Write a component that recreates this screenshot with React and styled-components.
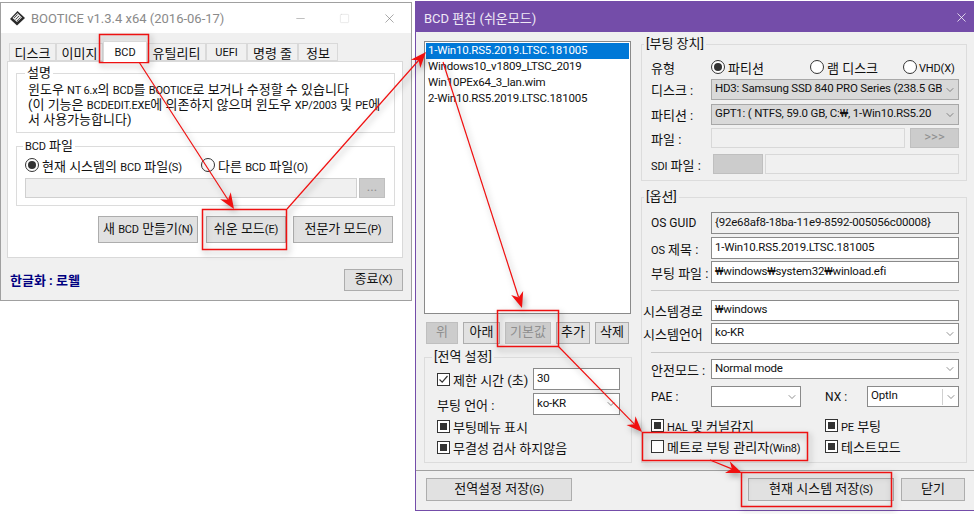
import styled, { createGlobalStyle } from 'styled-components';
import { ChevronDown, X, Minus, Square } from 'lucide-react';

const Global = createGlobalStyle`
  * { box-sizing: border-box; }
  body {
    margin: 0;
    background: #fff;
    font-family: Roboto, "Noto Sans CJK KR", sans-serif;
    font-size: 13px;
    color: #111;
  }
`;

const Desktop = styled.div`
  position: relative;
  width: 974px;
  height: 514px;
  overflow: hidden;
  background: #fff;
`;

const Win = styled.div`
  position: absolute;
  left: ${p => p.$x}px;
  top: ${p => p.$y}px;
  width: ${p => p.$w}px;
  height: ${p => p.$h}px;
  background: #f0f0f0;
  border: 1px solid ${p => p.$border};
  display: flex;
  flex-direction: column;
`;

const TitleBar = styled.div`
  height: ${p => p.$h}px;
  flex: none;
  display: flex;
  align-items: center;
  background: ${p => p.$bg};
  color: ${p => p.$color};
  padding-left: ${p => p.$pad}px;
  font-size: 13px;
`;

const TitleText = styled.span`
  margin-left: ${p => p.$ml || 0}px;
`;

const Controls = styled.div`
  margin-left: auto;
  display: flex;
  align-items: center;
  gap: ${p => p.$gap || 0}px;
  padding-right: ${p => p.$pr}px;
`;

const Tabs = styled.div`
  display: flex;
  height: 18px;
  margin: 10px 0 0 8px;
  align-items: flex-end;
`;

const Tab = styled.div`
  width: ${p => p.$w}px;
  height: ${p => (p.$active ? 21 : 18)}px;
  margin-bottom: ${p => (p.$active ? -1 : 0)}px;
  background: ${p => (p.$active ? '#fff' : '#f0f0f0')};
  border: 1px solid #d9d9d9;
  border-bottom: ${p => (p.$active ? 'none' : '1px solid #d9d9d9')};
  font-size: ${p => (p.$latin ? 11 : 13)}px;
  display: flex;
  align-items: center;
  justify-content: center;
  white-space: nowrap;
  position: relative;
  z-index: ${p => (p.$active ? 1 : 0)};
`;

const Panel = styled.div`
  margin: 0 8px 0 6px;
  height: 197px;
  background: #fff;
  border: 1px solid #d9d9d9;
  padding: 11px 7px 0 8px;
`;

const Group = styled.div`
  position: relative;
  width: ${p => (p.$w ? `${p.$w}px` : 'auto')};
  height: ${p => p.$h}px;
  margin-top: ${p => p.$mt || 0}px;
  border: 1px solid #dcdcdc;
  padding: 0 ${p => p.$pr || 0}px 0 ${p => p.$pl || 0}px;
`;

const Legend = styled.span`
  position: absolute;
  left: ${p => p.$x}px;
  top: -9px;
  padding: 0 2px;
  line-height: 16px;
  font-size: 13px;
  background: ${p => p.$bg};
  white-space: nowrap;
`;

const Description = styled.p`
  margin: 9px 0 0 11px;
  font-size: 13px;
  line-height: 14px;
  white-space: nowrap;
`;

const Row = styled.div`
  display: flex;
  align-items: center;
  height: ${p => p.$h}px;
  margin-top: ${p => p.$mt || 0}px;
`;

const Label = styled.span`
  flex: none;
  width: ${p => p.$w}px;
  margin-left: ${p => p.$ml || 0}px;
  font-size: ${p => (p.$latin ? 12 : 13)}px;
  white-space: nowrap;
`;

const Field = styled.div`
  flex: ${p => (p.$w ? 'none' : 1)};
  width: ${p => (p.$w ? `${p.$w}px` : 'auto')};
  min-width: 0;
  height: 100%;
  margin-left: ${p => p.$ml || 0}px;
  padding: 0 3px 3px;
  background: ${p => p.$bg || '#fff'};
  border: 1px solid ${p => p.$border || '#8a8a8a'};
  font-size: 11.5px;
  letter-spacing: -0.2px;
  display: flex;
  align-items: center;
  white-space: nowrap;
  overflow: hidden;
`;

const SelectBox = styled(Field)`
  padding: 0 0 3px 3px;
`;

const SelectText = styled.span`
  flex: 1;
  min-width: 0;
  overflow: hidden;
`;

const Arrow = styled.span`
  flex: none;
  width: 16px;
  height: 100%;
  margin-bottom: -3px;
  display: flex;
  align-items: center;
  justify-content: center;
  color: #555;
  border-left: ${p => (p.$split ? '1px solid #d0d0d0' : 'none')};
`;

const Select = ({ text, w, gray, split, ml }) => (
  <SelectBox $w={w} $ml={ml} $bg={gray ? '#d9d9d9' : '#fff'} $border={gray ? '#a8a8a8' : '#8a8a8a'}>
    <SelectText>{text}</SelectText>
    <Arrow $split={split}><ChevronDown size={12} strokeWidth={1.3} /></Arrow>
  </SelectBox>
);

const Button = styled.div`
  flex: none;
  width: ${p => p.$w}px;
  height: ${p => p.$h}px;
  margin-left: ${p => p.$ml || 0}px;
  background: ${p => (p.$off ? '#cccccc' : '#e1e1e1')};
  border: 1px solid ${p => (p.$off ? '#bfbfbf' : '#adadad')};
  color: ${p => (p.$off ? '#8f8f8f' : '#111')};
  font-size: 13px;
  line-height: ${p => p.$h - 4}px;
  text-align: center;
  white-space: nowrap;
`;

const Small = styled.span`
  font-size: 11px;
  letter-spacing: -0.15px;
`;

const Option = styled.span`
  flex: none;
  display: inline-flex;
  align-items: center;
  gap: ${p => p.$gap ?? 3}px;
  width: ${p => (p.$w ? `${p.$w}px` : 'auto')};
  white-space: nowrap;
  font-size: 13px;
`;

const RadioDot = styled.span`
  flex: none;
  width: 14px;
  height: 14px;
  border-radius: 50%;
  border: 1px solid #333;
  background: #fff;
  display: flex;
  align-items: center;
  justify-content: center;
  &::after {
    content: "";
    width: 8px;
    height: 8px;
    border-radius: 50%;
    background: ${p => (p.$on ? '#333' : 'transparent')};
  }
`;

const CheckBox = styled.span`
  flex: none;
  width: 13px;
  height: 13px;
  border: 1px solid #333;
  background: #fff;
  display: flex;
  align-items: center;
  justify-content: center;
  &::after {
    content: "";
    width: 7px;
    height: 7px;
    background: ${p => (p.$fill ? '#333' : 'transparent')};
  }
`;

const TickBox = styled(CheckBox)`
  &::after { display: none; }
`;

const Radio = ({ on, w, gap, children }) => (
  <Option $w={w} $gap={gap}><RadioDot $on={on} /><span>{children}</span></Option>
);

const Check = ({ fill, tick, w, children }) => (
  <Option $w={w}>
    {tick ? (
      <TickBox>
        <svg width="11" height="11" viewBox="0 0 11 11">
          <path d="M1.5 5.5 L4.2 8.2 L9.5 2" fill="none" stroke="#333" strokeWidth="1.2" />
        </svg>
      </TickBox>
    ) : <CheckBox $fill={fill} />}
    <span>{children}</span>
  </Option>
);

const PanelButtons = styled(Row)`
  justify-content: flex-end;
  padding-right: 2px;
`;

const Foot = styled.div`
  flex: 1;
  display: flex;
  align-items: center;
  justify-content: space-between;
  padding: 1px 8px 0 9px;
`;

const Credit = styled.span`
  font-weight: 700;
  font-size: 13px;
  color: #000080;
`;

const EditBody = styled.div`
  display: flex;
  height: 439px;
  flex: none;
  border-bottom: 1px solid #a0a0a0;
`;

const LeftCol = styled.div`
  width: 225px;
  flex: none;
  padding: 9px 0 0 8px;
`;

const RightCol = styled.div`
  width: 326px;
  flex: none;
  padding-top: 12px;
`;

const List = styled.div`
  height: 273px;
  width: 207px;
  background: #fff;
  border: 1px solid #8a8a8a;
  padding: 1px;
  font-size: 11.5px;
  letter-spacing: -0.2px;
`;

const Item = styled.div`
  height: 16px;
  line-height: 15px;
  padding-left: 2px;
  background: ${p => (p.$on ? '#0078d7' : 'transparent')};
  color: ${p => (p.$on ? '#fff' : '#111')};
`;

const Divider = styled.div`
  height: 1px;
  background: #c8c8c8;
  margin-top: ${p => p.$mt}px;
`;

const BottomBar = styled.div`
  display: flex;
  padding: 7px 0 0 10px;
`;

const Overlay = styled.svg`
  position: absolute;
  left: 0;
  top: 0;
  pointer-events: none;
  filter: drop-shadow(2px 3px 3px rgba(0, 0, 0, 0.35));
`;

const ArrowLine = ({ x1, y1, x2, y2 }) => {
  const a = Math.atan2(y2 - y1, x2 - x1);
  const len = 17;
  const wide = 0.38;
  const p1 = [x2 - len * Math.cos(a - wide), y2 - len * Math.sin(a - wide)];
  const p2 = [x2 - len * Math.cos(a + wide), y2 - len * Math.sin(a + wide)];
  const n = [x2 - 11 * Math.cos(a), y2 - 11 * Math.sin(a)];
  return (
    <g>
      <line x1={x1} y1={y1} x2={n[0]} y2={n[1]} stroke="#f01010" strokeWidth="1.2" />
      <polygon points={`${x2},${y2} ${p1} ${n} ${p2}`} fill="#f01010" />
    </g>
  );
};

const Mark = ({ x, y, w, h }) => (
  <rect x={x + 0.5} y={y + 0.5} width={w} height={h} fill="none" stroke="#ee1111" strokeWidth="1.5" />
);

const DiskIcon = () => (
  <svg width="17" height="17" viewBox="0 0 17 17">
    <path d="M8.5 1 L16 8 L8 15.5 L1 9 Z" fill="#2a2a2a" />
    <path d="M8.5 3 L13 7.5 L8 12 L3.5 8 Z" fill="#e8e8e8" />
    <path d="M5 8 L8.5 4.5 M6.5 9.5 L10 6 M8 11 L11.5 7.5" stroke="#333" strokeWidth="0.8" />
  </svg>
);

const bootEntries = [
  '1-Win10.RS5.2019.LTSC.181005',
  'Windows10_v1809_LTSC_2019',
  'Win10PEx64_3_lan.wim',
  '2-Win10.RS5.2019.LTSC.181005',
];

const App = () => (
  <Desktop>
    <Global />
    <Win $x={0} $y={2} $w={412} $h={299} $border="#a0a0a0">
      <TitleBar $h={30} $bg="#fff" $color="#8a8a8a" $pad={8}>
        <DiskIcon />
        <TitleText $ml={5}>BOOTICE v1.3.4 x64 (2016-06-17)</TitleText>
        <Controls $gap={32} $pr={14}>
          <Minus size={13} strokeWidth={1} color="#8a8a8a" />
          <Square size={11} strokeWidth={1} color="#d0d0d0" />
          <X size={15} strokeWidth={1} color="#777" />
        </Controls>
      </TitleBar>
      <Tabs>
        <Tab $w={47}>디스크</Tab>
        <Tab $w={47}>이미지</Tab>
        <Tab $w={44} $active $latin>BCD</Tab>
        <Tab $w={59}>유틸리티</Tab>
        <Tab $w={41} $latin>UEFI</Tab>
        <Tab $w={51}>명령 줄</Tab>
        <Tab $w={40}>정보</Tab>
      </Tabs>
      <Panel>
        <Group $h={60}>
          <Legend $x={8} $bg="#fff">설명</Legend>
          <Description>
            윈도우 <Small>NT 6.x</Small>의 <Small>BCD</Small>를 <Small>BOOTICE</Small>로 보거나 수정할 수 있습니다<br />
            (이 기능은 <Small>BCDEDIT.EXE</Small>에 의존하지 않으며 윈도우 <Small>XP/2003</Small> 및 <Small>PE</Small>에<br />
            서 사용가능합니다)
          </Description>
        </Group>
        <Group $h={60} $mt={13} $pl={8}>
          <Legend $x={6} $bg="#fff"><Small>BCD</Small> 파일</Legend>
          <Row $h={20} $mt={8}>
            <Radio on w={176}>현재 시스템의 <Small>BCD</Small> 파일<Small>(S)</Small></Radio>
            <Radio>다른 <Small>BCD</Small> 파일<Small>(O)</Small></Radio>
          </Row>
          <Row $h={20} $mt={3}>
            <Field $w={332} $bg="#f0f0f0" $border="#d0d0d0" />
            <Button $w={26} $h={20} $ml={2} $off>...</Button>
          </Row>
        </Group>
        <PanelButtons $h={27} $mt={10}>
          <Button $w={100} $h={27}>새 <Small>BCD</Small> 만들기<Small>(N)</Small></Button>
          <Button $w={80} $h={27} $ml={8}>쉬운 모드<Small>(E)</Small></Button>
          <Button $w={100} $h={27} $ml={7}>전문가 모드<Small>(P)</Small></Button>
        </PanelButtons>
      </Panel>
      <Foot>
        <Credit>한글화 : 로웰</Credit>
        <Button $w={59} $h={22}>종료<Small>(X)</Small></Button>
      </Foot>
    </Win>

    <Win $x={415} $y={1} $w={560} $h={510} $border="#744da9">
      <TitleBar $h={30} $bg="#744da9" $color="#efe9f6" $pad={8}>
        <TitleText>BCD 편집 (쉬운모드)</TitleText>
        <Controls $pr={5}>
          <X size={15} strokeWidth={1.2} color="#fff" />
        </Controls>
      </TitleBar>
      <EditBody>
        <LeftCol>
          <List>
            {bootEntries.map((name, i) => (
              <Item key={name} $on={i === 0}>{name}</Item>
            ))}
          </List>
          <Row $h={22} $mt={8}>
            <Button $w={32} $h={22} $ml={2} $off>위</Button>
            <Button $w={37} $h={22} $ml={5}>아래</Button>
            <Button $w={46} $h={22} $ml={5} $off>기본값</Button>
            <Button $w={34} $h={22} $ml={5}>추가</Button>
            <Button $w={34} $h={22} $ml={5}>삭제</Button>
          </Row>
          <Group $w={208} $h={106} $mt={13} $pl={12} $pr={11}>
            <Legend $x={7} $bg="#f0f0f0">[전역 설정]</Legend>
            <Row $h={22} $mt={10}>
              <Check tick w={96}>제한 시간 (초)</Check>
              <Field $w={87}>30</Field>
            </Row>
            <Row $h={22} $mt={3}>
              <Label $w={96}>부팅 언어 :</Label>
              <Select w={87} text="ko-KR" />
            </Row>
            <Row $h={21} $mt={1}><Check fill>부팅메뉴 표시</Check></Row>
            <Row $h={21}><Check fill>무결성 검사 하지않음</Check></Row>
          </Group>
        </LeftCol>
        <RightCol>
          <Group $h={137} $pl={9} $pr={7}>
            <Legend $x={2} $bg="#f0f0f0">[부팅 장치]</Legend>
            <Row $h={20} $mt={12}>
              <Label $w={60}>유형</Label>
              <Radio on w={99}>파티션</Radio>
              <Radio w={93}>램 디스크</Radio>
              <Radio gap={2}><Small>VHD(X)</Small></Radio>
            </Row>
            <Row $h={21} $mt={2}>
              <Label $w={60}>디스크 :</Label>
              <Select gray text="HD3: Samsung SSD 840 PRO Series (238.5 GB," />
            </Row>
            <Row $h={21} $mt={4}>
              <Label $w={60}>파티션 :</Label>
              <Select gray text="GPT1: ( NTFS, 59.0 GB, C:₩, 1-Win10.RS5.20" />
            </Row>
            <Row $h={20} $mt={3}>
              <Label $w={60}>파일 :</Label>
              <Field $w={194} $bg="#f0f0f0" $border="#d8d8d8" />
              <Button $w={49} $h={20} $ml={5} $off>&gt;&gt;&gt;</Button>
            </Row>
            <Row $h={20} $mt={6}>
              <Label $w={60}><Small>SDI</Small> 파일 :</Label>
              <Button $w={50} $h={20} $ml={2} $off />
              <Field $ml={2} $bg="#f0f0f0" $border="#d8d8d8" />
            </Row>
          </Group>
          <Group $h={266} $mt={16} $pl={9} $pr={7}>
            <Legend $x={2} $bg="#f0f0f0">[옵션]</Legend>
            <Row $h={22} $mt={14}>
              <Label $w={60} $latin>OS GUID</Label>
              <Field $bg="#f0f0f0">{'{92e68af8-18ba-11e9-8592-005056c00008}'}</Field>
            </Row>
            <Row $h={22} $mt={3}>
              <Label $w={60}><Small>OS</Small> 제목 :</Label>
              <Field>1-Win10.RS5.2019.LTSC.181005</Field>
            </Row>
            <Row $h={22} $mt={2}>
              <Label $w={60}>부팅 파일 :</Label>
              <Field>₩windows₩system32₩winload.efi</Field>
            </Row>
            <Divider $mt={7} />
            <Row $h={21} $mt={9}>
              <Label $w={68} $ml={-8}>시스템경로</Label>
              <Field>₩windows</Field>
            </Row>
            <Row $h={21} $mt={2}>
              <Label $w={68} $ml={-8}>시스템언어</Label>
              <Select text="ko-KR" />
            </Row>
            <Divider $mt={8} />
            <Row $h={20} $mt={6}>
              <Label $w={60}>안전모드 :</Label>
              <Select text="Normal mode" />
            </Row>
            <Row $h={21} $mt={7}>
              <Label $w={60} $latin>PAE :</Label>
              <Select w={90} text="" />
              <Label $w={42} $ml={24} $latin>NX :</Label>
              <Select w={92} text="OptIn" split />
            </Row>
            <Row $h={20} $mt={8}>
              <Check fill w={174}><Small>HAL</Small> 및 커널감지</Check>
              <Check fill><Small>PE</Small> 부팅</Check>
            </Row>
            <Row $h={20} $mt={1}>
              <Check w={174}>메트로 부팅 관리자<Small>(Win8)</Small></Check>
              <Check fill>테스트모드</Check>
            </Row>
          </Group>
        </RightCol>
      </EditBody>
      <BottomBar>
        <Button $w={146} $h={23}>전역설정 저장<Small>(G)</Small></Button>
        <Button $w={146} $h={23} $ml={176}>현재 시스템 저장<Small>(S)</Small></Button>
        <Button $w={64} $h={23} $ml={7}>닫기</Button>
      </BottomBar>
    </Win>

    <Overlay width="974" height="514" viewBox="0 0 974 514">
      <Mark x={99} y={34} w={49} h={28} />
      <Mark x={202} y={209} w={84} h={40} />
      <Mark x={497} y={310} w={61} h={36} />
      <Mark x={642} y={432} w={165} h={28} />
      <Mark x={741} y={472} w={150} h={34} />
      <ArrowLine x1={139} y1={62} x2={234} y2={209} />
      <ArrowLine x1={287} y1={209} x2={426} y2={52} />
      <ArrowLine x1={443} y1={62} x2={522} y2={308} />
      <ArrowLine x1={558} y1={346} x2={642} y2={432} />
      <ArrowLine x1={710} y1={460} x2={742} y2={473} />
    </Overlay>
  </Desktop>
);

export default App;
